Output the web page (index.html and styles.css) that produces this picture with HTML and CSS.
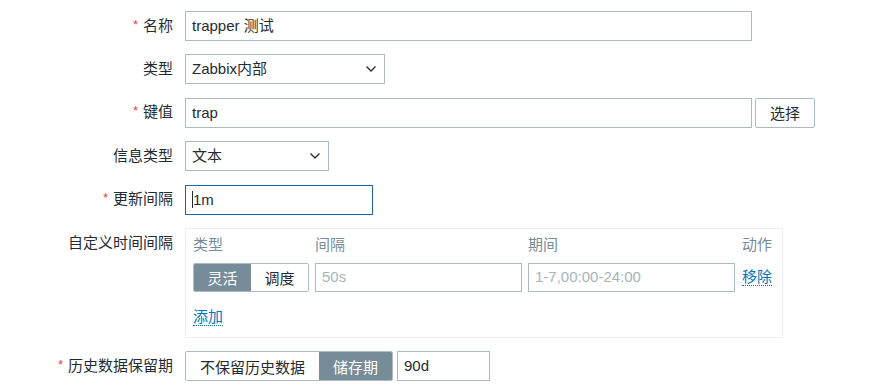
FILE: index.html
```html
<!DOCTYPE html>
<html lang="zh-CN">
<head>
<meta charset="utf-8">
<title>监控项</title>
<link rel="stylesheet" href="styles.css">
</head>
<body>
<form class="form">
  <div class="row">
    <div class="label"><span class="req">*</span>名称</div>
    <div class="field"><div class="input w-name">trapper 测试</div></div>
  </div>
  <div class="row">
    <div class="label">类型</div>
    <div class="field"><div class="input select w-type"><span>Zabbix内部</span><svg class="chev" width="12" height="8" viewBox="0 0 12 8"><polyline points="1.5,1.5 6,6 10.5,1.5" fill="none" stroke="#1f2c33" stroke-width="1.3"/></svg></div></div>
  </div>
  <div class="row">
    <div class="label"><span class="req">*</span>键值</div>
    <div class="field"><div class="input w-name">trap</div><button type="button" class="btn">选择</button></div>
  </div>
  <div class="row">
    <div class="label">信息类型</div>
    <div class="field"><div class="input select w-info"><span>文本</span><svg class="chev" width="12" height="8" viewBox="0 0 12 8"><polyline points="1.5,1.5 6,6 10.5,1.5" fill="none" stroke="#1f2c33" stroke-width="1.3"/></svg></div></div>
  </div>
  <div class="row">
    <div class="label"><span class="req">*</span>更新间隔</div>
    <div class="field"><div class="input focus w-upd"><span class="caret"></span>1m</div></div>
  </div>
  <div class="row top">
    <div class="label tall">自定义时间间隔</div>
    <div class="field">
      <div class="intervals">
        <div class="th">类型</div>
        <div class="th">间隔</div>
        <div class="th">期间</div>
        <div class="th th-end">动作</div>
        <div class="seg small">
          <span class="seg-item on">灵活</span><span class="seg-item">调度</span>
        </div>
        <div class="input small ph">50s</div>
        <div class="input small ph">1-7,00:00-24:00</div>
        <a class="link" href="#">移除</a>
        <div class="add"><a class="link" href="#">添加</a></div>
      </div>
    </div>
  </div>
  <div class="row">
    <div class="label"><span class="req">*</span>历史数据保留期</div>
    <div class="field">
      <div class="seg">
        <span class="seg-item">不保留历史数据</span><span class="seg-item on">储存期</span>
      </div>
      <div class="input w-hist">90d</div>
    </div>
  </div>
</form>
</body>
</html>
```

FILE: styles.css
```css
* { box-sizing: border-box; }

html, body {
  margin: 0;
  padding: 0;
  background: #ffffff;
}

body {
  font-family: "Liberation Sans", Arial, "Noto Sans CJK SC", sans-serif;
  font-size: 15px;
  color: #1f2c33;
}

.form {
  display: flex;
  flex-direction: column;
  gap: 13.4px;
  padding-top: 11px;
}

.row {
  display: grid;
  grid-template-columns: 173px 1fr;
  column-gap: 12px;
  align-items: center;
}

.row.top { align-items: start; }

.label {
  text-align: right;
  line-height: 18px;
  white-space: nowrap;
}

.label.tall { line-height: 30px; }

.req {
  color: #e54545;
  font-size: 13px;
  margin-right: 5px;
  position: relative;
  top: -2px;
}

.field {
  display: flex;
  align-items: center;
  gap: 4px;
}

.input {
  height: 30px;
  border: 1px solid #acbbc2;
  background: #fff;
  padding: 0 6px;
  display: flex;
  align-items: center;
  line-height: 18px;
  white-space: nowrap;
  color: #1f2c33;
}

.input.focus { border-color: #1f65a6; }

.caret {
  display: inline-block;
  width: 1px;
  height: 17px;
  background: #1f2c33;
}

.select { justify-content: space-between; }
.chev { margin-right: 1px; }

.w-name { width: 567px; }
.w-type { width: 200px; }
.w-info { width: 144px; }
.w-upd { width: 188px; }
.w-hist { width: 93px; }

.btn {
  height: 30px;
  width: 60px;
  margin-left: -1px;
  border: 1px solid #acbbc2;
  border-radius: 2px;
  background: #fff;
  font-family: inherit;
  font-size: 15px;
  color: #1f2c33;
  padding: 0;
}

.intervals {
  width: 598px;
  border: 1px solid #ebeef0;
  padding: 7px 10px 11px 7px;
  display: grid;
  grid-template-columns: 116px 207px 207px 1fr;
  column-gap: 6px;
  grid-template-rows: 18px 29px auto;
  row-gap: 9px;
  align-items: center;
}

.th {
  color: #768d99;
  line-height: 18px;
  white-space: nowrap;
}

.th-end { text-align: right; }

.input.small { height: 29px; }
.input.ph { color: #a7b4bc; }

.add {
  grid-column: 1 / -1;
  margin-top: 7px;
  height: 18px;
}

.link {
  color: #0275b8;
  text-decoration: none;
  border-bottom: 1px dotted #0275b8;
  line-height: 17px;
  display: inline-block;
  white-space: nowrap;
}

.intervals > .link { justify-self: end; }

.seg {
  display: flex;
  height: 30px;
  border: 1px solid #acbbc2;
  border-radius: 2px;
  overflow: hidden;
}

.seg.small { height: 29px; }

.seg-item {
  display: flex;
  align-items: center;
  padding: 0 14px;
  background: #fff;
  color: #1f2c33;
  white-space: nowrap;
}

.seg.small .seg-item { flex: 1; justify-content: center; padding: 0; }

.seg-item.on {
  background: #768d99;
  color: #fff;
}
```
